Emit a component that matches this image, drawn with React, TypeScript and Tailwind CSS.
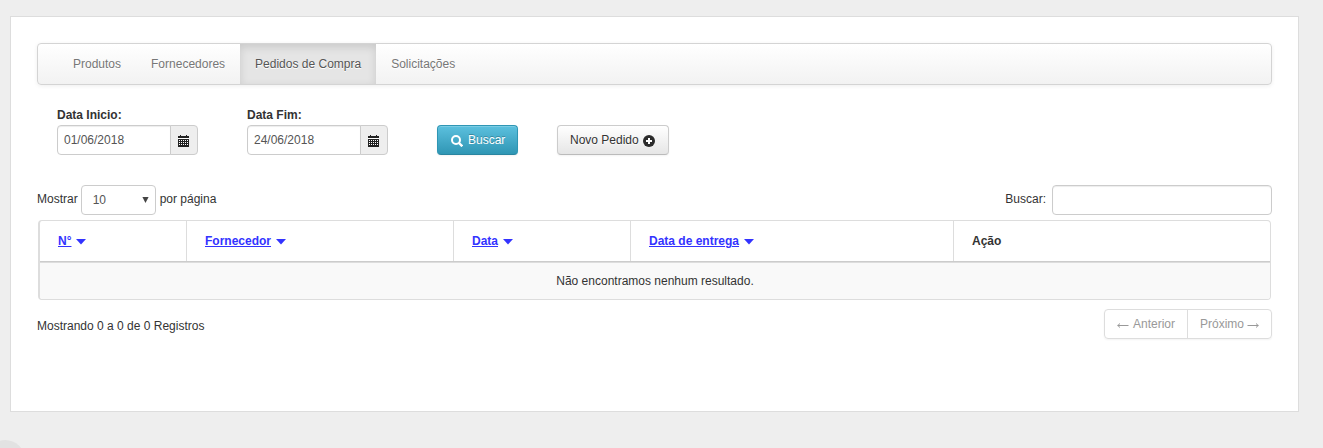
import React from "react";

const tabs = ["Produtos", "Fornecedores", "Pedidos de Compra", "Solicitações"];

function CalendarIcon() {
  return (
    <svg width="12" height="12" viewBox="0 0 12 12" fill="#222" shapeRendering="crispEdges">
      <path d="M0 1h2V0h1v1h5V0h1v1h2v2H0z" />
      <rect x="0" y="4" width="11" height="8" />
      <g fill="#fff">
        {[5, 7, 9].map((y) => [1, 3, 5, 7, 9].map((x) => <rect key={`${x}-${y}`} x={x} y={y} width="1" height="1" />))}
        <rect x="0" y="3" width="11" height="1" />
      </g>
    </svg>
  );
}

function SearchIcon() {
  return (
    <svg width="12" height="12" viewBox="0 0 12 12" fill="none" stroke="#fff">
      <circle cx="5" cy="5" r="4" strokeWidth="2" />
      <path d="M8 8l3.3 3.3" strokeWidth="2.4" />
    </svg>
  );
}

function PlusIcon() {
  return (
    <svg width="12" height="12" viewBox="0 0 12 12">
      <circle cx="6" cy="6" r="6" fill="#2b2b2b" />
      <path d="M6 3v6M3 6h6" stroke="#fff" strokeWidth="2" />
    </svg>
  );
}

function ArrowIcon({ className }: { className: string }) {
  return (
    <svg className={className} width="12" height="5" viewBox="0 0 12 5" fill="none" stroke="#999">
      <path d="M0.5 2.5h11M3 0.5L0.8 2.5L3 4.5" />
    </svg>
  );
}

function DateField({ label, value }: { label: string; value: string }) {
  return (
    <div className="w-[190px]">
      <div className="h-5 font-bold leading-5">{label}</div>
      <div className="flex h-[30px] w-[141px]">
        <div className="w-[114px] rounded-l border border-[#ccc] pl-1.5 leading-[28px] text-[#555] shadow-[inset_0_1px_1px_rgba(0,0,0,0.075)]">
          {value}
        </div>
        <div className="-ml-px flex w-7 justify-center rounded-r border border-[#ccc] bg-[#eee] pt-[9px]">
          <CalendarIcon />
        </div>
      </div>
    </div>
  );
}

function SortHeader({ label, width }: { label: string; width: string }) {
  return (
    <div className={`flex items-center border-r border-[#ddd] pl-[18px] ${width}`}>
      <span className="font-bold text-[#3333ff] underline">{label}</span>
      <svg className="ml-[5px] mt-[2px]" width="10" height="6" viewBox="0 0 10 6">
        <path d="M0 0h10L5 5.6z" fill="#3333ff" />
      </svg>
    </div>
  );
}

export default function App() {
  return (
    <div className="relative h-[448px] overflow-hidden bg-[#eee] pl-[10px] pt-4 font-['Liberation_Sans',Arial,sans-serif] text-[12px] leading-5 text-[#333]">
      <main className="h-[396px] w-[1289px] border border-[#ddd] bg-white px-[26px] pt-[26px]">
        <nav className="flex h-[42px] rounded border border-[#d4d4d4] bg-linear-to-b from-white to-[#f2f2f2] pl-5 shadow-[0_1px_4px_rgba(0,0,0,0.065)]">
          {tabs.map((tab) => (
            <a
              key={tab}
              className={
                tab === "Pedidos de Compra"
                  ? "bg-[#e5e5e5] px-[15px] leading-10 text-[#555] shadow-[inset_0_3px_8px_rgba(0,0,0,0.125)] [text-shadow:0_1px_0_#fff]"
                  : "px-[15px] leading-10 text-[#777] [text-shadow:0_1px_0_#fff]"
              }
            >
              {tab}
            </a>
          ))}
        </nav>

        <section className="mt-5 flex h-[50px] items-end pl-5">
          <DateField label="Data Inicio:" value="01/06/2018" />
          <DateField label="Data Fim:" value="24/06/2018" />
          <button className="flex h-[30px] w-[81px] rounded border border-[#2f96b4] border-b-[#2a85a0] bg-linear-to-b from-[#5bc0de] to-[#2f96b4] pl-[13px] leading-[28px] text-white shadow-[inset_0_1px_0_rgba(255,255,255,0.2),0_1px_2px_rgba(0,0,0,0.05)] [text-shadow:0_-1px_0_rgba(0,0,0,0.25)]">
            <span className="mr-[5px] mt-[9px]">
              <SearchIcon />
            </span>
            Buscar
          </button>
          <button className="ml-[39px] flex h-[30px] w-28 rounded border border-[#ccc] border-b-[#bbb] bg-linear-to-b from-white to-[#e6e6e6] pl-3 leading-[28px] shadow-[inset_0_1px_0_rgba(255,255,255,0.2),0_1px_2px_rgba(0,0,0,0.05)] [text-shadow:0_1px_1px_rgba(255,255,255,0.75)]">
            Novo Pedido
            <span className="ml-1 mt-[9px]">
              <PlusIcon />
            </span>
          </button>
        </section>

        <section className="mt-[30px] flex h-[30px] justify-between leading-[28px]">
          <div className="flex">
            Mostrar
            <div className="ml-[3px] mr-1 flex h-[30px] w-[75px] items-center justify-between rounded border border-[#ccc] pl-[11px] pr-1.5 text-[#555]">
              10
              <svg width="7" height="6" viewBox="0 0 7 6">
                <path d="M0.4 0h6.2L3.5 6z" fill="#444" />
              </svg>
            </div>
            por página
          </div>
          <div className="flex">
            Buscar:
            <div className="ml-1.5 h-[30px] w-[220px] rounded border border-[#ccc] shadow-[inset_0_1px_1px_rgba(0,0,0,0.075)]" />
          </div>
        </section>

        <section className="ml-px mt-[5px] h-20 w-[1233px] overflow-hidden rounded border border-l-2 border-[#ddd]">
          <div className="flex h-[41px] border-b border-[#ccc]">
            <SortHeader label="N°" width="w-[147px]" />
            <SortHeader label="Fornecedor" width="w-[267px]" />
            <SortHeader label="Data" width="w-[177px]" />
            <SortHeader label="Data de entrega" width="w-[323px]" />
            <div className="flex-1 pl-[18px] font-bold leading-10">Ação</div>
          </div>
          <div className="h-[37px] border-t border-[#ddd] bg-[#f9f9f9] text-center leading-9">
            Não encontramos nenhum resultado.
          </div>
        </section>

        <footer className="mt-[9px] flex justify-between">
          <span className="mt-[7px]">Mostrando 0 a 0 de 0 Registros</span>
          <div className="flex h-[30px] w-[168px] rounded border border-[#ddd] leading-[28px] text-[#999] shadow-[0_1px_2px_rgba(0,0,0,0.05)]">
            <span className="flex w-[83px] border-r border-[#ddd] pl-3">
              <ArrowIcon className="mr-1 mt-[13px]" />
              Anterior
            </span>
            <span className="flex pl-3">
              Próximo
              <ArrowIcon className="ml-[3px] mt-[13px] rotate-180" />
            </span>
          </div>
        </footer>
      </main>
      <div className="absolute -left-[15px] top-[440px] h-10 w-10 rounded-full bg-[#e2e2e2]" />
    </div>
  );
}
